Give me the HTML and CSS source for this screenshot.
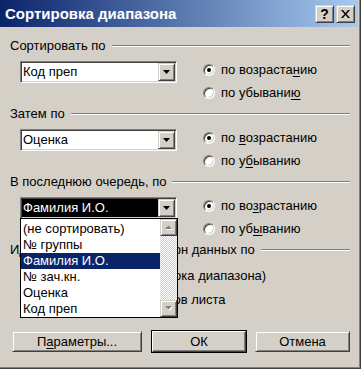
FILE: index.html
```html
<!DOCTYPE html>
<html lang="ru">
<head>
    <meta charset="UTF-8">
    <title>Сортировка диапазона</title>
    <link rel="stylesheet" href="styles.css">
</head>
<body>
    <div class="window">
        <div class="titlebar">
            <span class="title">Сортировка диапазона</span>
            <span class="tb-btn raised">?</span>
            <span class="tb-btn raised close">
                <svg width="9" height="8" viewBox="0 0 9 8"><path d="M0 0h2l2.5 3 2.5-3h2L5.5 4 9 8H7L4.5 5 2 8H0l3.5-4z" fill="#000"/></svg>
            </span>
        </div>

        <div class="content">
            <!-- первый ключ -->
            <section class="group">
                <div class="legend"><span>Сортировать по</span><i class="rule"></i></div>
                <div class="group-row">
                    <div class="combo">
                        <span class="combo-text">Код преп</span>
                        <span class="combo-btn raised"><svg width="7" height="4" viewBox="0 0 7 4"><path d="M0 0h7L3.5 4z" fill="#000"/></svg></span>
                    </div>
                    <div class="radios">
                        <label class="radio-row"><i class="radio on"></i><span>по возраста<u>н</u>ию</span></label>
                        <label class="radio-row"><i class="radio"></i><span>по убывани<u>ю</u></span></label>
                    </div>
                </div>
            </section>

            <section class="group">
                <div class="legend"><span>Затем по</span><i class="rule"></i></div>
                <div class="group-row">
                    <div class="combo">
                        <span class="combo-text">Оценка</span>
                        <span class="combo-btn raised"><svg width="7" height="4" viewBox="0 0 7 4"><path d="M0 0h7L3.5 4z" fill="#000"/></svg></span>
                    </div>
                    <div class="radios">
                        <label class="radio-row"><i class="radio on"></i><span>по <u>в</u>озрастанию</span></label>
                        <label class="radio-row"><i class="radio"></i><span>по у<u>б</u>ыванию</span></label>
                    </div>
                </div>
            </section>

            <section class="group">
                <div class="legend"><span>В последнюю очередь, по</span><i class="rule"></i></div>
                <div class="group-row">
                    <div class="combo">
                        <span class="combo-text selected">Фамилия И.О.</span>
                        <span class="combo-btn raised"><svg width="7" height="4" viewBox="0 0 7 4"><path d="M0 0h7L3.5 4z" fill="#000"/></svg></span>
                    </div>
                    <div class="radios">
                        <label class="radio-row"><i class="radio on"></i><span>по во<u>з</u>растанию</span></label>
                        <label class="radio-row"><i class="radio"></i><span>по уб<u>ы</u>ванию</span></label>
                    </div>
                </div>
            </section>

            <section class="group last">
                <div class="legend"><span>Идентифицировать диапазон данных по</span><i class="rule"></i></div>
                <div class="radios-v">
                    <label class="radio-row"><i class="radio on"></i><span>подписям (первая строка диапазона)</span></label>
                    <label class="radio-row"><i class="radio"></i><span>обозначениям столбцов листа</span></label>
                </div>
            </section>

            <div class="buttons">
                <span class="btn raised wide"><span>П<u>а</u>раметры...</span></span>
                <span class="btn raised default">ОК</span>
                <span class="btn raised">Отмена</span>
            </div>
        </div>

        <!-- раскрытый список третьего ключа -->
        <div class="droplist">
            <div class="items">
                <div class="item">(не сортировать)</div>
                <div class="item">№ группы</div>
                <div class="item active">Фамилия И.О.</div>
                <div class="item">№ зач.кн.</div>
                <div class="item">Оценка</div>
                <div class="item">Код преп</div>
            </div>
            <div class="scrollbar">
                <span class="sb-btn raised"><svg width="8" height="5" viewBox="0 0 8 5"><path d="M1 5h7L4.5 1.5z" fill="#fff"/><path d="M0 4h7L3.5 0.5z" fill="#808080"/></svg></span>
                <span class="sb-track"></span>
                <span class="sb-btn raised"><svg width="8" height="5" viewBox="0 0 8 5"><path d="M1 1h7L4.5 4.5z" fill="#fff"/><path d="M0 0h7L3.5 3.5z" fill="#808080"/></svg></span>
            </div>
        </div>
    </div>
</body>
</html>
```

FILE: styles.css
```css
* {
    box-sizing: border-box;
}
html, body {
    margin: 0;
    padding: 0;
}
body {
    background-color: #d4d0c8;
    font-family: "Liberation Sans", Arial, sans-serif;
    font-size: 13px;
    color: #000;
}
u {
    text-decoration: underline;
    text-underline-offset: 2px;
}
.window {
    position: relative;
    width: 361px;
    height: 369px;
    padding: 0 3px 3px 0;
    background-color: #d4d0c8;
    box-shadow: inset -1px -1px #404040, inset -2px -2px #808080;
    display: flex;
    flex-direction: column;
}
.raised {
    background-color: #d4d0c8;
    border: 1px solid;
    border-color: #d4d0c8 #404040 #404040 #d4d0c8;
    box-shadow: inset 1px 1px #fff, inset -1px -1px #808080;
}
.titlebar {
    height: 27px;
    flex: none;
    display: flex;
    align-items: center;
    gap: 2px;
    padding: 0 3px 0 5px;
    background: linear-gradient(to right, #0a246a, #a6caf0);
    color: #fff;
}
.title {
    flex: 1;
    font-size: 15px;
    font-weight: bold;
}
.tb-btn {
    width: 19px;
    height: 18px;
    display: flex;
    align-items: center;
    justify-content: center;
    color: #000;
    font-size: 14px;
    font-weight: bold;
}
.content {
    flex: 1;
    padding: 12px 8px 0 10px;
}
.legend {
    display: flex;
    align-items: center;
    height: 14px;
    line-height: 14px;
    white-space: nowrap;
}
.rule {
    flex: 1;
    height: 2px;
    margin-left: 6px;
    border-top: 1px solid #808080;
    border-bottom: 1px solid #fff;
}
.group {
    margin-bottom: 3px;
}
.group-row {
    display: flex;
    align-items: flex-start;
    margin-top: 5px;
    padding-left: 10px;
}
.combo {
    width: 157px;
    height: 22px;
    margin-top: 3px;
    padding: 1px;
    display: flex;
    background-color: #fff;
    border: 1px solid;
    border-color: #808080 #fff #fff #808080;
    box-shadow: inset 1px 1px #404040, inset -1px -1px #d4d0c8;
}
.combo-text {
    flex: 1;
    line-height: 18px;
    padding-left: 1px;
    white-space: nowrap;
}
.combo-text.selected {
    background-color: #000;
    color: #fff;
}
.combo-btn {
    width: 17px;
    height: 18px;
    display: flex;
    align-items: center;
    justify-content: center;
}
.radios {
    margin-left: 26px;
    display: flex;
    flex-direction: column;
}
.radio-row {
    height: 23px;
    display: flex;
    align-items: center;
    gap: 6px;
    white-space: nowrap;
}
.radio {
    position: relative;
    flex: none;
    width: 12px;
    height: 12px;
    border-radius: 50%;
    background-color: #fff;
    border: 1px solid;
    border-color: #808080 #fff #fff #808080;
    box-shadow: inset 1px 1px #404040, inset -1px -1px #d4d0c8;
}
.radio.on::after {
    content: "";
    position: absolute;
    left: 3px;
    top: 3px;
    width: 4px;
    height: 4px;
    border-radius: 50%;
    background-color: #000;
}
.radios-v {
    margin-top: 6px;
    padding-left: 12px;
}
.radios-v .radio-row {
    height: 24px;
    gap: 8px;
}
.buttons {
    display: flex;
    margin-top: 20px;
    padding-left: 2px;
}
.btn {
    width: 95px;
    height: 21px;
    display: flex;
    align-items: center;
    justify-content: center;
    margin-left: 9px;
}
.btn.wide {
    width: 130px;
    margin-left: 0;
}
.btn.default {
    width: 94px;
    margin-left: 10px;
    outline: 1px solid #000;
    outline-offset: 0;
    border-color: #fff #404040 #404040 #fff;
    box-shadow: inset -1px -1px #808080;
}
.droplist {
    position: absolute;
    left: 20px;
    top: 218px;
    width: 158px;
    height: 100px;
    display: flex;
    background-color: #fff;
    border: 1px solid #000;
}
.items {
    flex: 1;
    padding-top: 2px;
}
.item {
    height: 16px;
    line-height: 16px;
    padding-left: 2px;
    white-space: nowrap;
}
.item.active {
    background-color: #0a246a;
    color: #fff;
}
.scrollbar {
    width: 17px;
    display: flex;
    flex-direction: column;
}
.sb-btn {
    height: 17px;
    display: flex;
    align-items: center;
    justify-content: center;
}
.sb-track {
    flex: 1;
    background: repeating-conic-gradient(#d4d0c8 0 25%, #fff 0 50%) 0 0 / 2px 2px;
}
```
